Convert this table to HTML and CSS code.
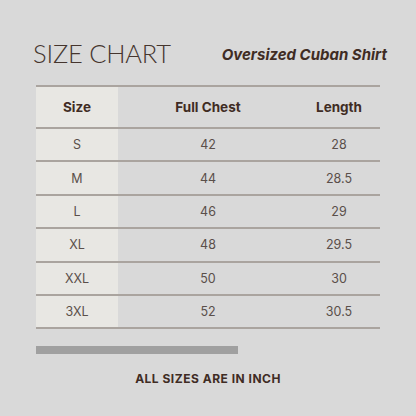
FILE: index.html
```html
<!DOCTYPE html>
<html>
<head>
<meta charset="utf-8">
<link rel="stylesheet" href="styles.css">
</head>
<body>
<div class="page">
  <header class="head">
    <h1 class="title">SIZE CHART</h1>
    <p class="subtitle">Oversized Cuban Shirt</p>
  </header>
  <table class="chart">
    <thead>
      <tr><th class="c1">Size</th><th class="c2">Full Chest</th><th class="c3">Length</th></tr>
    </thead>
    <tbody>
      <tr><td class="c1">S</td><td class="c2">42</td><td class="c3">28</td></tr>
      <tr><td class="c1">M</td><td class="c2">44</td><td class="c3">28.5</td></tr>
      <tr><td class="c1">L</td><td class="c2">46</td><td class="c3">29</td></tr>
      <tr><td class="c1">XL</td><td class="c2">48</td><td class="c3">29.5</td></tr>
      <tr><td class="c1">XXL</td><td class="c2">50</td><td class="c3">30</td></tr>
      <tr><td class="c1">3XL</td><td class="c2">52</td><td class="c3">30.5</td></tr>
    </tbody>
  </table>
  <div class="bar"></div>
  <p class="note">ALL SIZES ARE IN INCH</p>
</div>
</body>
</html>
```

FILE: styles.css
```css
html, body {
  margin: 0;
  padding: 0;
  background: #d9d9d9;
}
.page {
  width: 416px;
  height: 416px;
  box-sizing: border-box;
  padding: 38px 36px 0 36px;
  font-family: "Inter", "Open Sans", sans-serif;
  color: #3f2c24;
}
.head {
  display: flex;
  justify-content: space-between;
  align-items: center;
  height: 30px;
}
.title {
  margin: 0 0 0 -3px;
  font-family: "Lato", sans-serif;
  font-weight: 300;
  font-size: 25.5px;
  letter-spacing: -0.2px;
  color: #45352e;
}
.subtitle {
  margin: 2px -7px 0 0;
  font-weight: 700;
  font-style: italic;
  font-size: 15px;
  color: #3f2c24;
}
.chart {
  margin-top: 17px;
  width: 344px;
  border-collapse: collapse;
  border-top: 2px solid #aaa49f;
}
.chart th, .chart td {
  padding: 0;
  text-align: center;
  border-bottom: 2px solid #aaa49f;
}
.chart th {
  height: 40px;
  font-weight: 700;
  font-size: 13.5px;
  color: #3f2c24;
}
.chart td {
  height: 31.4px;
  font-size: 12.5px;
  font-weight: 400;
  color: #5a4f4a;
}
.c1 { width: 82px; background: #e8e7e3; }
.c2 { width: 180px; }
.c3 { width: 82px; }
.bar {
  margin-top: 17px;
  width: 202px;
  height: 8px;
  background: #a0a0a0;
}
.note {
  margin: 17px 0 0 0;
  text-align: center;
  font-weight: 700;
  font-size: 12px;
  letter-spacing: 0.5px;
  color: #3f2c24;
}
```
